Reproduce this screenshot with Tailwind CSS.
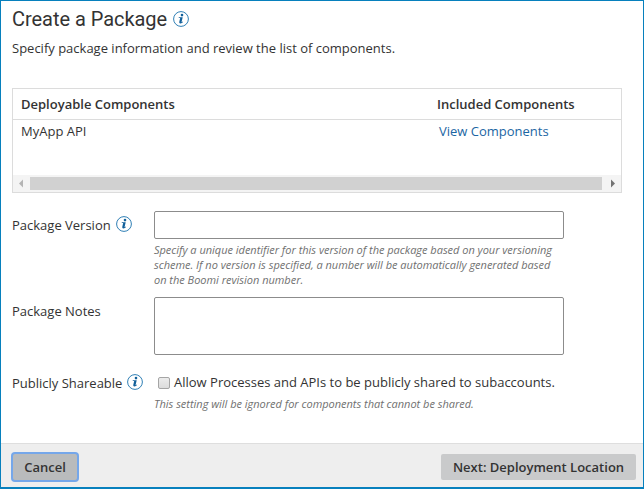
<!DOCTYPE html>
<html lang="en">
<head>
<meta charset="utf-8">
<title>Create a Package</title>
<script src="https://cdn.jsdelivr.net/npm/@tailwindcss/browser@4"></script>
</head>
<body class="bg-white">
<svg class="hidden">
  <symbol id="info" viewBox="0 0 16 16">
    <circle cx="8" cy="8" r="7.4" fill="none" stroke="#2f7fb5" stroke-width="1"/>
    <circle cx="9" cy="4.1" r="1.3" fill="#12609a"/>
    <path d="M5.8 6.3h3.9L8.5 11.2q.6 0 1.3-.6l.3.4q-1.2 1.5-2.8 1.4-1.4-.2-1-1.7l.9-3.7H5.7z" fill="#12609a"/>
  </symbol>
</svg>
<main class="flex h-[489px] w-[644px] flex-col border border-b-2 border-[#0780bd] bg-white font-['Open_Sans',sans-serif] text-[13px] leading-[18px] text-[#333]">
  <section class="flex h-[442px] flex-col pl-[11px]">
    <header class="flex h-[36px] items-center">
      <h1 class="w-[161px] whitespace-nowrap font-[Roboto,sans-serif] text-[20px] leading-[24px] tracking-[-0.04px]">Create a Package</h1>
      <svg class="size-4"><use href="#info"/></svg>
    </header>
    <p class="mt-[2px]">Specify package information and review the list of components.</p>
    <div class="mt-[31px] flex h-[105px] w-[610px] flex-col border border-[#dcdcdc]">
      <div class="flex h-[31px] items-center border-b border-[#dcdcdc] pl-2 font-semibold">
        <div class="w-[416px]">Deployable Components</div>
        <div>Included Components</div>
      </div>
      <div class="flex h-[55px] pt-[2px] pl-2">
        <div class="w-[418px]">MyApp API</div>
        <a class="text-[#1b66a3]">View Components</a>
      </div>
      <div class="flex h-[17px] items-center bg-[#f4f4f4]">
        <svg class="h-[17px] w-[17px]" viewBox="0 0 17 17"><path d="M6 8.5l4-4v8z" fill="#b4b4b4"/></svg>
        <div class="h-[13px] w-[572px] bg-[#d1d1d1]"></div>
        <svg class="ml-[2px] h-[17px] w-[17px]" viewBox="0 0 17 17"><path d="M11 8.5l-4-4v8z" fill="#737373"/></svg>
      </div>
    </div>
    <div class="mt-[18px] flex h-[86px]">
      <div class="flex h-[28px] w-[142px] items-center gap-[5px]"><span class="w-[99px] whitespace-nowrap">Package Version</span><svg class="mb-[2px] size-4"><use href="#info"/></svg></div>
      <div>
        <input class="block h-[28px] w-[410px] rounded-xs border border-[#8c8c8c] bg-white px-2">
        <p class="mt-[3px] text-[11px] leading-[15px] tracking-[-0.015px] whitespace-nowrap text-[#707070] italic">Specify a unique identifier for this version of the package based on your versioning<br>scheme. If no version is specified, a number will be automatically generated based<br>on the Boomi revision number.</p>
      </div>
    </div>
    <div class="flex h-[58px]">
      <div class="w-[142px] pt-[5px]">Package Notes</div>
      <textarea class="block h-[58px] w-[410px] resize-none rounded-xs border border-[#8c8c8c] bg-white px-2"></textarea>
    </div>
    <div class="mt-[18px] flex">
      <div class="flex h-[20px] w-[142px] gap-[4px]"><span class="w-[111px] pt-[1px] whitespace-nowrap">Publicly Shareable</span><svg class="mt-[1px] size-4"><use href="#info"/></svg></div>
      <div>
        <label class="flex items-center gap-[4px] pl-[4px]"><input type="checkbox" class="mt-[2px] size-3 appearance-none rounded-xs border border-[#a5a5a5] bg-linear-to-b from-[#ececec] to-[#dcdcdc]">Allow Processes and APIs to be publicly shared to subaccounts.</label>
        <p class="mt-[5px] text-[11px] leading-[15px] tracking-[-0.015px] text-[#707070] italic">This setting will be ignored for components that cannot be shared.</p>
      </div>
    </div>
  </section>
  <footer class="flex flex-1 items-start justify-between border-t border-[#dedede] bg-[#eee] pt-[10px] pr-[7px] pl-[12px] font-semibold">
    <button class="h-[26px] w-[64px] rounded-xs bg-[#b9bbbc] ring-2 ring-[#75a7ea]">Cancel</button>
    <button class="h-[26px] w-[195px] rounded-xs bg-[#c9cacb] whitespace-nowrap">Next: Deployment Location</button>
  </footer>
</main>
</body>
</html>
